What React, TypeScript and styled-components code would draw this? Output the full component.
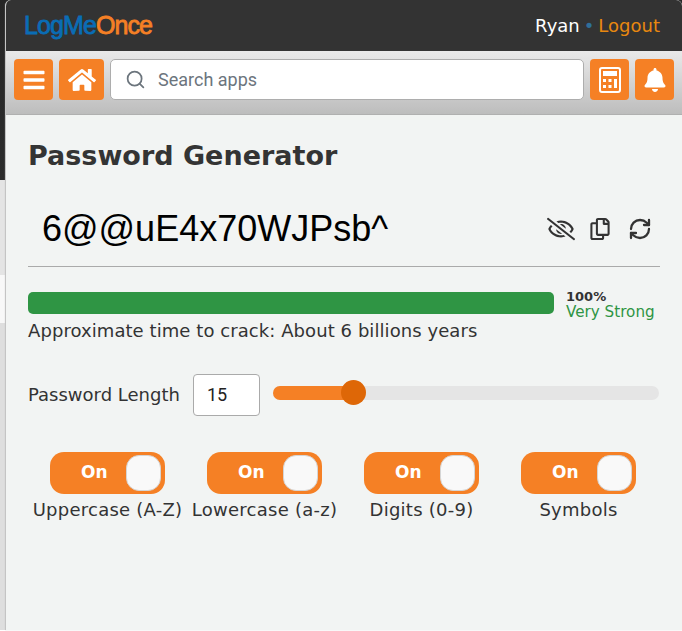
import React from "react";
import styled, { createGlobalStyle } from "styled-components";
import { FaHome, FaBell, FaRegCopy, FaBars, FaRegEyeSlash } from "react-icons/fa";
import { FiSearch } from "react-icons/fi";
import { RefreshCw } from "lucide-react";

const Global = createGlobalStyle`
  html, body { margin: 0; padding: 0; background: #2f2f2f; }
  body { width: 682px; height: 631px; overflow: hidden; font-family: "DejaVu Sans", sans-serif; }
`;

const Stage = styled.div`
  width: 682px;
  height: 631px;
  display: flex;
  align-items: flex-start;
  background: linear-gradient(
    #262626 0,
    #2c2c2c 180px,
    #e4e4e4 180px,
    #e4e4e4 275px,
    #f8f8f8 275px,
    #f8f8f8 323px,
    #dedede 323px,
    #dedede 630px,
    #ffffff 630px
  );
`;

const Popup = styled.div`
  width: 676px;
  margin-left: 5px;
  height: 630px;
  display: flex;
  flex-direction: column;
  background: #f2f4f3;
  border-left: 1px solid #c4c4c4;
  border-radius: 6px 6px 0 0;
  box-shadow: 0 0 1px #bbbbbb;
  overflow: hidden;
`;

const Header = styled.header`
  height: 51px;
  flex: none;
  background: #333333;
  display: flex;
  align-items: center;
  justify-content: space-between;
  padding: 0 22px 0 18px;
`;

const Logo = styled.div`
  font-family: "Liberation Sans", Arial, sans-serif;
  font-size: 25px;
  letter-spacing: -0.9px;
  -webkit-text-stroke: 0.8px currentColor;
  color: #0a6db5;
`;

const LogoAccent = styled.span`
  color: #f58025;
`;

const User = styled.div`
  font-size: 18px;
  color: #ffffff;
  display: flex;
  gap: 4px;
  align-items: center;
`;

const Dot = styled.span`
  color: #2f6f99;
`;

const Logout = styled.span`
  color: #e8880f;
`;

const Toolbar = styled.div`
  height: 64px;
  flex: none;
  box-sizing: border-box;
  padding: 8px 8px 0 8px;
  display: flex;
  align-items: flex-start;
  gap: 6px;
  background: linear-gradient(#e9e9e9, #bdbdbd);
  border-bottom: 1px solid #b0b0b0;
`;

const IconButton = styled.div<{ $w: number }>`
  width: ${(p) => p.$w}px;
  height: 41px;
  flex: none;
  background: #f58025;
  border-radius: 4px;
  color: #fff;
  display: flex;
  align-items: center;
  justify-content: center;
`;

const Search = styled.div`
  flex: 1;
  height: 41px;
  box-sizing: border-box;
  background: #fff;
  border: 1px solid #adadad;
  border-radius: 5px;
  display: flex;
  align-items: center;
  gap: 12px;
  padding-left: 14px;
  color: #6c757d;
  font-family: Roboto, sans-serif;
  font-size: 18px;
`;

const Content = styled.main`
  flex: 1;
  padding: 25px 22px 0 22px;
  display: flex;
  flex-direction: column;
`;

const Title = styled.h1`
  margin: 0;
  font-size: 27px;
  line-height: 32px;
  font-weight: 700;
  color: #343434;
`;

const PasswordRow = styled.div`
  margin-top: 19px;
  height: 76px;
  box-sizing: border-box;
  display: flex;
  align-items: center;
  justify-content: space-between;
  border-bottom: 1px solid #aaaaaa;
  padding: 0 8px 0 14px;
`;

const Password = styled.div`
  font-family: "Liberation Sans", Arial, sans-serif;
  font-size: 36px;
  color: #000;
`;

const Actions = styled.div`
  display: flex;
  align-items: center;
  gap: 17px;
  color: #333;
`;

const EyeSlot = styled.span`
  display: flex;
  margin-right: -3px;
`;

const StrengthRow = styled.div`
  margin-top: 22px;
  display: flex;
  align-items: flex-start;
  gap: 12px;
`;

const Bar = styled.div`
  width: 526px;
  height: 22px;
  margin-top: 3px;
  background: #2f9544;
  border-radius: 5px;
  flex: none;
`;

const StrengthText = styled.div`
  display: flex;
  flex-direction: column;
`;

const Percent = styled.span`
  font-size: 13px;
  font-weight: 700;
  color: #333;
  line-height: 15px;
`;

const Strong = styled.span`
  font-size: 15.2px;
  line-height: 16px;
  color: #2f9544;
`;

const Crack = styled.div`
  font-size: 18px;
  line-height: 22px;
  letter-spacing: 0.07px;
  color: #333;
`;

const LengthRow = styled.div`
  margin-top: 32px;
  display: flex;
  align-items: center;
`;

const LengthLabel = styled.div`
  font-size: 18px;
  color: #333;
  width: 165px;
  flex: none;
  padding-bottom: 2px;
`;

const LengthInput = styled.div`
  width: 67px;
  height: 42px;
  box-sizing: border-box;
  background: #fff;
  border: 1px solid #aaa;
  border-radius: 4px;
  font-family: Roboto, sans-serif;
  font-size: 18px;
  color: #222;
  display: flex;
  align-items: center;
  padding: 0 0 2px 13px;
  flex: none;
`;

const Track = styled.div`
  position: relative;
  margin: 0 0 4px 13px;
  width: 386px;
  height: 14px;
  border-radius: 7px;
  background: #e5e5e5;
`;

const TrackFill = styled.div`
  width: 80px;
  height: 100%;
  background: #f58025;
  border-radius: 7px 0 0 7px;
`;

const Thumb = styled.div`
  position: absolute;
  left: 68px;
  top: -6px;
  width: 25px;
  height: 25px;
  border-radius: 50%;
  background: #de6707;
`;

const Toggles = styled.div`
  margin-top: 36px;
  display: grid;
  grid-template-columns: repeat(4, 157px);
  margin-left: 1px;
  justify-items: center;
`;

const Option = styled.div`
  display: flex;
  flex-direction: column;
  align-items: center;
  gap: 5px;
  width: 157px;
`;

const Toggle = styled.div`
  position: relative;
  width: 115px;
  height: 42px;
  border-radius: 14px;
  background: #f58025;
  color: #fff;
  font-weight: 700;
  font-size: 17px;
`;

const ToggleText = styled.span`
  position: absolute;
  left: 31px;
  top: 10px;
  line-height: 20px;
`;

const Knob = styled.div`
  position: absolute;
  right: 4px;
  top: 3px;
  width: 35px;
  height: 36px;
  box-sizing: border-box;
  border-radius: 13px;
  background: #f9f9f9;
  border: 1px solid #d5d5d5;
`;

const OptionLabel = styled.div`
  font-size: 18px;
  line-height: 22px;
  letter-spacing: 0.25px;
  color: #333;
  white-space: nowrap;
`;

const CalcIcon = () => (
  <svg width="22" height="26" viewBox="0 0 22 26" fill="#fff">
    <path
      fillRule="evenodd"
      d="M3 0h16a3 3 0 0 1 3 3v20a3 3 0 0 1-3 3H3a3 3 0 0 1-3-3V3a3 3 0 0 1 3-3zm0 2a1 1 0 0 0-1 1v20a1 1 0 0 0 1 1h16a1 1 0 0 0 1-1V3a1 1 0 0 0-1-1z"
    />
    <rect x="4" y="4" width="14" height="5" />
    <rect x="4" y="12" width="3" height="3" />
    <rect x="9.500" y="12" width="3" height="3" />
    <rect x="15" y="12" width="3" height="9" />
    <rect x="4" y="18" width="3" height="3" />
    <rect x="9.500" y="18" width="3" height="3" />
  </svg>
);

const options = ["Uppercase (A-Z)", "Lowercase (a-z)", "Digits (0-9)", "Symbols"];

export default function App() {
  return (
    <Stage>
      <Global />
      <Popup>
        <Header>
          <Logo>
            LogMe<LogoAccent>Once</LogoAccent>
          </Logo>
          <User>
            <span>Ryan</span>
            <Dot>•</Dot>
            <Logout>Logout</Logout>
          </User>
        </Header>
        <Toolbar>
          <IconButton $w={39}>
            <FaBars size={24} />
          </IconButton>
          <IconButton $w={45}>
            <FaHome size={28} />
          </IconButton>
          <Search>
            <FiSearch size={21} />
            Search apps
          </Search>
          <IconButton $w={39}>
            <CalcIcon />
          </IconButton>
          <IconButton $w={39}>
            <FaBell size={24} />
          </IconButton>
        </Toolbar>
        <Content>
          <Title>Password Generator</Title>
          <PasswordRow>
            <Password>6@@uE4x70WJPsb^</Password>
            <Actions>
              <EyeSlot>
                <FaRegEyeSlash size={28} />
              </EyeSlot>
              <FaRegCopy size={22} />
              <RefreshCw size={24} strokeWidth={2.3} />
            </Actions>
          </PasswordRow>
          <StrengthRow>
            <Bar />
            <StrengthText>
              <Percent>100%</Percent>
              <Strong>Very Strong</Strong>
            </StrengthText>
          </StrengthRow>
          <Crack>Approximate time to crack: About 6 billions years</Crack>
          <LengthRow>
            <LengthLabel>Password Length</LengthLabel>
            <LengthInput>15</LengthInput>
            <Track>
              <TrackFill />
              <Thumb />
            </Track>
          </LengthRow>
          <Toggles>
            {options.map((o) => (
              <Option key={o}>
                <Toggle>
                  <ToggleText>On</ToggleText>
                  <Knob />
                </Toggle>
                <OptionLabel>{o}</OptionLabel>
              </Option>
            ))}
          </Toggles>
        </Content>
      </Popup>
    </Stage>
  );
}
